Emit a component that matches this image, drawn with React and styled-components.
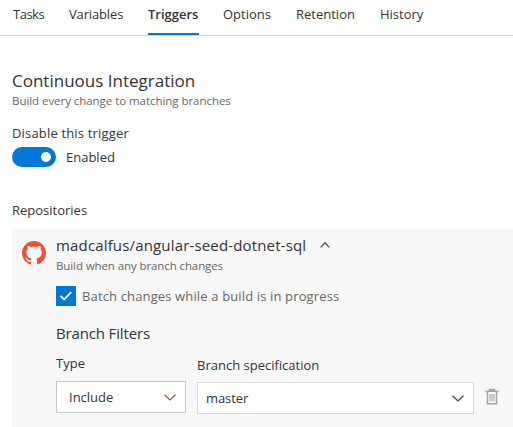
import React from "react";
import styled, { createGlobalStyle } from "styled-components";

const GlobalStyle = createGlobalStyle`
  * { box-sizing: border-box; }
  body {
    margin: 0;
    background: #fff;
    color: #333;
    font-family: "Open Sans", "Noto Sans", sans-serif;
    font-size: 13px;
    line-height: 20px;
    overflow: hidden;
  }
`;

const Page = styled.div`
  width: 513px;
  height: 427px;
  overflow: hidden;
`;

const TabBar = styled.nav`
  display: flex;
  gap: 24px;
  height: 36px;
  padding: 4px 0 0 13px;
  border-bottom: 1px solid #d6d6d6;
`;

const Tab = styled.a`
  flex: none;
  width: ${(p) => p.$width}px;
  height: 31px;
  white-space: nowrap;
  letter-spacing: ${(p) => p.$spacing || 0}px;
  font-weight: ${(p) => (p.$active ? 600 : 400)};
  border-bottom: 2px solid ${(p) => (p.$active ? "#0078d7" : "transparent")};
`;

const Section = styled.section`
  padding: 33px 0 0 12px;
`;

const Title = styled.h1`
  margin: 0;
  font-size: 17px;
  font-weight: 400;
  line-height: 24px;
`;

const Hint = styled.div`
  font-size: 11.5px;
  line-height: 16px;
  color: #666;
  white-space: nowrap;
  letter-spacing: ${(p) => p.$spacing || 0}px;
`;

const Label = styled.div`
  white-space: nowrap;
  letter-spacing: ${(p) => p.$spacing || 0}px;
  margin-top: ${(p) => p.$top || 0}px;
`;

const ToggleRow = styled.div`
  display: flex;
  align-items: center;
  gap: 10px;
  height: 20px;
  margin-top: 4px;
`;

const Switch = styled.span`
  display: flex;
  align-items: center;
  justify-content: flex-end;
  width: 44px;
  height: 20px;
  padding-right: 5px;
  border-radius: 10px;
  background: #0078d7;
`;

const Knob = styled.span`
  width: 10px;
  height: 10px;
  border-radius: 50%;
  background: #fff;
`;

const Panel = styled.div`
  display: flex;
  height: 198px;
  margin-top: 9px;
  padding: 4px 0 0 10px;
  background: #f8f8f8;
`;

const LogoCell = styled.div`
  width: 34px;
  padding-top: 8px;
  svg { display: block; }
`;

const Details = styled.div`
  flex: 1;
`;

const RepoHeader = styled.div`
  display: flex;
  align-items: center;
  gap: 14px;
  height: 24px;
  margin-bottom: 1px;
  svg { margin-bottom: 1px; }
`;

const RepoName = styled.div`
  font-size: 15px;
  white-space: nowrap;
  letter-spacing: 0.16px;
`;

const CheckRow = styled.div`
  display: flex;
  gap: 6px;
  align-items: center;
  height: 20px;
  margin-top: 12px;
  color: #666;
`;

const CheckBox = styled.span`
  display: flex;
  width: 20px;
  height: 20px;
  background: #0078d7;
`;

const SubTitle = styled.h2`
  margin: 17px 0 0;
  font-size: 15px;
  font-weight: 400;
  line-height: 20px;
  letter-spacing: -0.15px;
`;

const FilterRow = styled.div`
  display: flex;
  margin-top: 10px;
`;

const Field = styled.div`
  width: ${(p) => p.$width}px;
  margin-right: ${(p) => p.$gap}px;
  padding-top: ${(p) => p.$top || 0}px;
`;

const Select = styled.div`
  display: flex;
  align-items: center;
  justify-content: space-between;
  height: 32px;
  margin-top: ${(p) => p.$top}px;
  padding: 0 ${(p) => p.$right}px 0 ${(p) => p.$left}px;
  border: 1px solid ${(p) => p.$border};
  background: #fff;
  svg { display: block; }
`;

const DeleteButton = styled.span`
  padding-top: 35px;
  svg { display: block; }
`;

const Chevron = ({ up, color = "#444" }) => (
  <svg width={up ? 10 : 12} height={up ? 6 : 7} viewBox="0 0 12 7" fill="none" stroke={color} strokeWidth={up ? 1.5 : 1.2}>
    <path d={up ? "M.7 6.3 6 .9l5.3 5.4" : "M.5.7 6 6 11.5.7"} />
  </svg>
);

const GitHubMark = () => (
  <svg width="24" height="24" viewBox="0 0 16 16" fill="#f05133">
    <path d="M8 0C3.58 0 0 3.58 0 8c0 3.54 2.29 6.53 5.47 7.59.4.07.55-.17.55-.38 0-.19-.01-.82-.01-1.49-2.01.37-2.53-.49-2.69-.94-.09-.23-.48-.94-.82-1.13-.28-.15-.68-.52-.01-.53.63-.01 1.08.58 1.23.82.72 1.21 1.87.87 2.33.66.07-.52.28-.87.51-1.07-1.78-.2-3.64-.89-3.64-3.95 0-.87.31-1.59.82-2.15-.08-.2-.36-1.02.08-2.12 0 0 .67-.21 2.2.82.64-.18 1.32-.27 2-.27s1.36.09 2 .27c1.53-1.04 2.2-.82 2.2-.82.44 1.1.16 1.92.08 2.12.51.56.82 1.27.82 2.15 0 3.07-1.87 3.75-3.65 3.95.29.25.54.73.54 1.48 0 1.07-.01 1.93-.01 2.2 0 .21.15.46.55.38A8.01 8.01 0 0 0 16 8c0-4.42-3.58-8-8-8z" />
  </svg>
);

const Trash = () => (
  <svg width="14" height="17" viewBox="0 0 14 17" fill="none" stroke="#a3a3a3">
    <path d="M4.5 3V1.5h5V3" strokeWidth="1.5" fill="#bbb" />
    <path d="M.5 3.5h13" strokeWidth="1.8" />
    <path d="M2.5 4v11.7h9V4" strokeWidth="1.5" fill="#fff" />
    <path d="M5 6v7.5M7 6v7.5M9 6v7.5" strokeWidth="1.1" />
  </svg>
);

const tabs = [
  { name: "Tasks", width: 32, spacing: -0.5 },
  { name: "Variables", width: 55, spacing: -0.15 },
  { name: "Triggers", width: 51, active: true },
  { name: "Options", width: 49 },
  { name: "Retention", width: 60 },
  { name: "History", width: 44 },
];

export default function App() {
  return (
    <Page>
      <GlobalStyle />
      <TabBar>
        {tabs.map((t) => (
          <Tab key={t.name} $width={t.width} $active={t.active} $spacing={t.spacing}>{t.name}</Tab>
        ))}
      </TabBar>
      <Section>
        <Title>Continuous Integration</Title>
        <Hint $spacing={-0.05}>Build every change to matching branches</Hint>
        <Label $top={14} $spacing={0.17}>Disable this trigger</Label>
        <ToggleRow>
          <Switch><Knob /></Switch>
          <Label>Enabled</Label>
        </ToggleRow>
        <Label $top={33}>Repositories</Label>
        <Panel>
          <LogoCell><GitHubMark /></LogoCell>
          <Details>
            <RepoHeader>
              <RepoName>madcalfus/angular-seed-dotnet-sql</RepoName>
              <Chevron up />
            </RepoHeader>
            <Hint $spacing={-0.1}>Build when any branch changes</Hint>
            <CheckRow>
              <CheckBox>
                <svg width="20" height="20" fill="none" stroke="#fff" strokeWidth="1.8">
                  <path d="m4.5 9.8 3.7 3.7 7-7.3" />
                </svg>
              </CheckBox>
              <Label $spacing={0.14}>Batch changes while a build is in progress</Label>
            </CheckRow>
            <SubTitle>Branch Filters</SubTitle>
            <FilterRow>
              <Field $width={130} $gap={11}>
                <Label>Type</Label>
                <Select $top={8} $left={12} $right={9} $border="#c8c8c8">
                  <Label>Include</Label>
                  <Chevron color="#8a5a40" />
                </Select>
              </Field>
              <Field $width={277} $gap={11} $top={2}>
                <Label>Branch specification</Label>
                <Select $top={7} $left={8} $right={9} $border="#dadada">
                  <Label $spacing={-0.1}>master</Label>
                  <Chevron color="#3f3f5c" />
                </Select>
              </Field>
              <DeleteButton><Trash /></DeleteButton>
            </FilterRow>
          </Details>
        </Panel>
      </Section>
    </Page>
  );
}
